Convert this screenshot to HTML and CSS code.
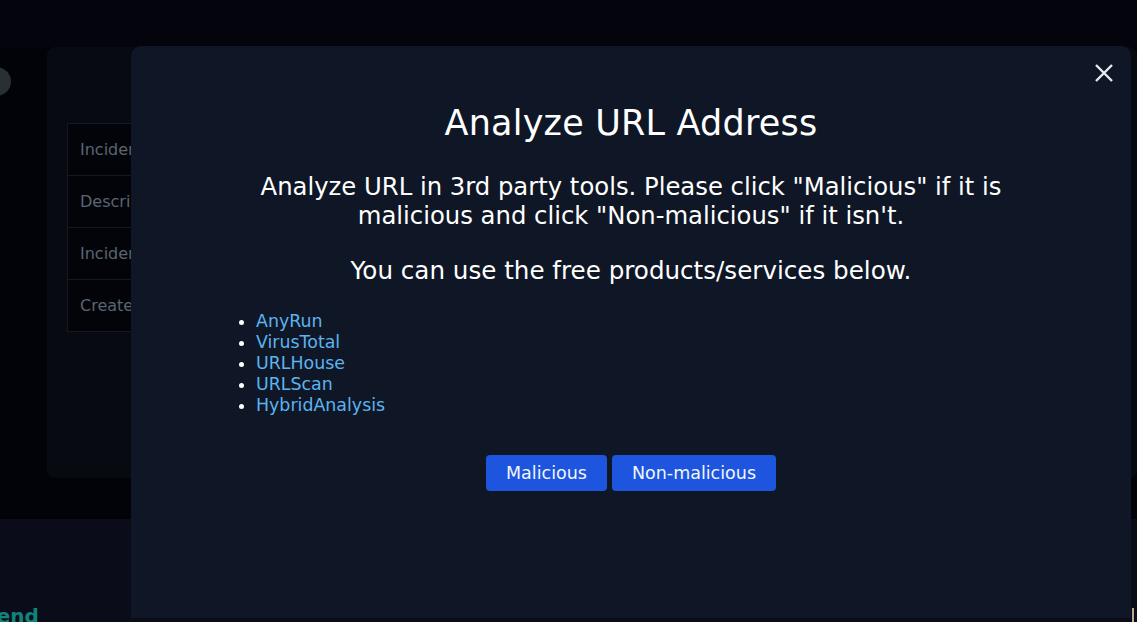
FILE: index.html
```html
<!DOCTYPE html>
<html>
<head>
<meta charset="utf-8">
<link rel="stylesheet" href="styles.css">
</head>
<body>
<div class="page">
  <div class="topbar"></div>
  <div class="main">
    <span class="side-toggle"></span>
    <div class="card">
      <table class="info">
        <tr><td>Incident Name</td></tr>
        <tr><td>Description</td></tr>
        <tr><td>Incident Type</td></tr>
        <tr><td>Created Date</td></tr>
      </table>
    </div>
  </div>
  <div class="footer"><span class="legend">Legend</span></div>
</div>

<div class="overlay">
  <div class="modal">
    <button class="close" aria-label="Close">
      <svg width="20" height="20" viewBox="0 0 20 20"><path d="M2 2 L18 18 M18 2 L2 18" stroke="#e8ecf2" stroke-width="2.4" stroke-linecap="butt"/></svg>
    </button>
    <h1 class="title">Analyze URL Address</h1>
    <p class="desc">Analyze URL in 3rd party tools. Please click "Malicious" if it is malicious and click "Non-malicious" if it isn't.</p>
    <p class="desc second">You can use the free products/services below.</p>
    <ul class="tools">
      <li><a>AnyRun</a></li>
      <li><a>VirusTotal</a></li>
      <li><a>URLHouse</a></li>
      <li><a>URLScan</a></li>
      <li><a>HybridAnalysis</a></li>
    </ul>
    <div class="actions">
      <button class="btn">Malicious</button>
      <button class="btn">Non-malicious</button>
    </div>
  </div>
  <div class="scroll-thumb"></div>
</div>
</body>
</html>
```
FILE: styles.css
```css
html, body {
  margin: 0;
  padding: 0;
  height: 100%;
  overflow: hidden;
}
body {
  background: #04050c;
  font-family: "DejaVu Sans", "Noto Sans", sans-serif;
  color: #fff;
}
.page {
  display: flex;
  flex-direction: column;
  height: 622px;
}
.topbar {
  height: 47px;
  flex: none;
}
.main {
  position: relative;
  height: 472px;
  flex: none;
  padding-left: 47px;
  background: #020308;
  box-sizing: border-box;
}
.side-toggle {
  position: absolute;
  left: -18px;
  top: 20px;
  width: 29px;
  height: 29px;
  border-radius: 50%;
  background: #2a2f35;
}
.card {
  background: #070a11;
  border-radius: 8px;
  height: 431px;
  padding: 76px 20px 0 20px;
  box-sizing: border-box;
}
.info {
  border-collapse: collapse;
  width: 500px;
  background: #03040a;
}
.info td {
  border: 1px solid #131827;
  height: 51px;
  padding: 0 0 0 12px;
  font-size: 16px;
  color: #5b6470;
}
.footer {
  flex: 1;
  background: #0b0c19;
  position: relative;
}
.legend {
  position: absolute;
  left: -44px;
  bottom: -6px;
  font-weight: bold;
  font-size: 20px;
  color: #0f8479;
}
.overlay {
  position: fixed;
  inset: 0;
  pointer-events: none;
}
.modal {
  position: absolute;
  left: 131px;
  top: 46px;
  width: 1000px;
  height: 572px;
  background: #0f1726;
  border-radius: 10px 10px 0 0;
  box-sizing: border-box;
  padding: 53px 97px 0 97px;
  text-align: center;
  pointer-events: auto;
}
.close {
  position: absolute;
  right: 17px;
  top: 17px;
  width: 20px;
  height: 20px;
  padding: 0;
  border: none;
  background: none;
  cursor: pointer;
}
.close svg { display: block; }
.title {
  margin: 0;
  font-size: 35px;
  font-weight: normal;
  line-height: 48px;
  letter-spacing: 0.2px;
}
.desc {
  margin: 25px 0 0 0;
  font-size: 24.3px;
  line-height: 29px;
  padding: 0 20px;
}
.desc.second {
  margin-top: 26px;
  font-size: 24.6px;
}
.tools {
  margin: 26px 0 0 0;
  padding-left: 28px;
  text-align: left;
  list-style: disc;
  font-size: 17.4px;
  line-height: 21px;
  color: #fff;
}
.tools li::marker { color: #fff; }
.tools a {
  color: #5cb3ef;
  cursor: pointer;
}
.actions {
  margin-top: 39px;
  display: flex;
  justify-content: center;
  gap: 5px;
}
.btn {
  height: 36px;
  padding: 0 20px;
  border: none;
  border-radius: 4px;
  background: #1d55df;
  color: #f2f5fb;
  font-family: inherit;
  font-size: 17.5px;
}
.scroll-thumb {
  position: absolute;
  right: 3px;
  bottom: 0;
  width: 2px;
  height: 14px;
  background: #b9a88a;
}
```
